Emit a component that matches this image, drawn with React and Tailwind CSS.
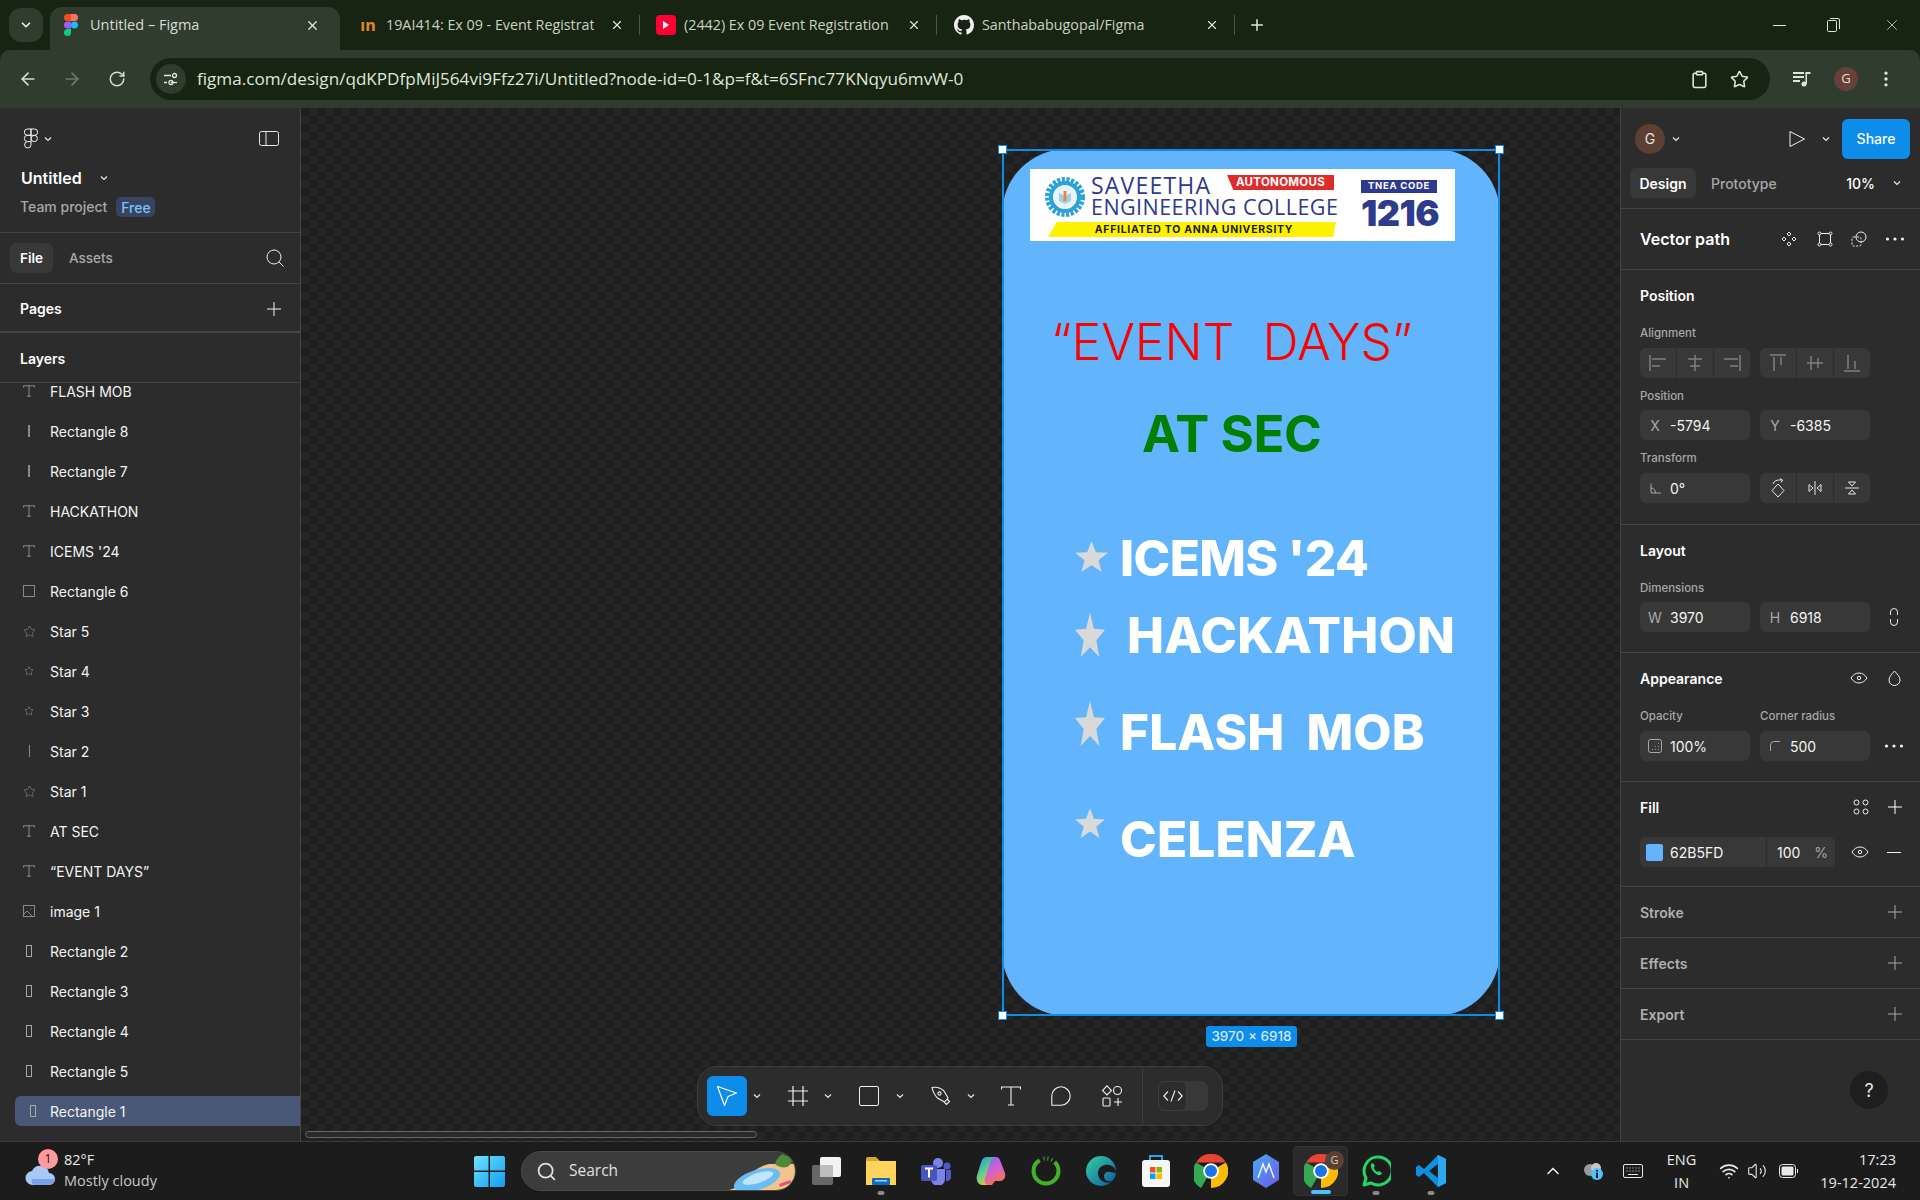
import React from 'react';
import { ArrowLeft, ArrowRight, RotateCw, X, Plus, Star, ChevronDown, Search, Clipboard, MoreVertical, ChevronUp, Wifi, Volume2 } from 'lucide-react';

const Chev = ({ className = '' }) => (
  <svg width="8" height="6" viewBox="0 0 8 6" fill="none" stroke="currentColor" strokeWidth="1.2" className={`text-[#e8e8e8] shrink-0 ${className}`}><path d="M1 1.5 4 4.5 7 1.5" /></svg>
);
const P = ({ className = 'text-[#f0f0f0]', s = 16 }) => (
  <svg width={s} height={s} viewBox="0 0 16 16" stroke="currentColor" strokeWidth="1" className={`shrink-0 ${className}`}><path d="M8 1v14M1 8h14" /></svg>
);
const Dots = () => (
  <svg width="20" height="4" viewBox="0 0 20 4" fill="#f0f0f0"><circle cx="2.5" cy="2" r="1.6" /><circle cx="10" cy="2" r="1.6" /><circle cx="17.5" cy="2" r="1.6" /></svg>
);
const EyeI = () => (
  <svg width="18" height="12" viewBox="0 0 18 12" fill="none" stroke="#f0f0f0" strokeWidth="1"><path d="M1 6c2-3.2 4.8-5 8-5s6 1.8 8 5c-2 3.2-4.8 5-8 5S3 9.200 1 6z" /><circle cx="9" cy="6" r="1.700" /></svg>
);

const layerIcon = {
  T: <svg width="12" height="12" viewBox="0 0 12 12" fill="none" stroke="#8a8a8a"><path d="M.5 2.500V.8h11v1.700M6 .8v10.400M4 11.200h4" /></svg>,
  bar: <div className="w-px h-[12px] bg-[#8a8a8a]" />,
  thin: <div className="w-[2px] h-[12px] bg-[#8a8a8a]" />,
  sq: <div className="w-[12px] h-[12px] border border-[#8a8a8a]" />,
  star: <Star size={13} strokeWidth={1} className="text-[#9a9a9a]" />,
  starS: <Star size={10} strokeWidth={1.200} className="text-[#9a9a9a]" />,
  img: <svg width="12" height="12" viewBox="0 0 12 12" fill="none" stroke="#8a8a8a"><rect x=".5" y=".5" width="11" height="11" /><path d="M.5 9.500 4 6l5.500 5.500M7.500 4.500l1-1" /></svg>,
  tall: <div className="w-[6px] h-[12px] border border-[#a8a8a8]" />,
};

const layers = [
  ['T', 'FLASH MOB'], ['thin', 'Rectangle 8'], ['thin', 'Rectangle 7'], ['T', 'HACKATHON'], ['T', "ICEMS '24"],
  ['sq', 'Rectangle 6'], ['star', 'Star 5'], ['starS', 'Star 4'], ['starS', 'Star 3'], ['bar', 'Star 2'], ['star', 'Star 1'],
  ['T', 'AT SEC'], ['T', '“EVENT DAYS”'], ['img', 'image 1'], ['tall', 'Rectangle 2'], ['tall', 'Rectangle 3'], ['tall', 'Rectangle 4'], ['tall', 'Rectangle 5'],
];

function BrowserTab({ icon, title, w, textW = 'w-[205px]', gapL = 'ml-[8px]' }) {
  return (
    <div className={`flex items-center h-[36px] relative shrink-0 ${w}`}>
      <div className="w-[20px] flex justify-center shrink-0">{icon}</div>
      <span className={`${gapL} whitespace-nowrap overflow-hidden text-[14.300px] text-[#c9d2c2] ${textW}`}>{title}</span>
      <X size={14} className="absolute text-[#dfe6da] top-[11px] right-[16px]" />
      <div className="absolute right-0 top-[8px] w-px h-[20px] bg-[#4a5646]" />
    </div>
  );
}

function TabStrip() {
  return (
    <div className="h-[50px] bg-[#182412] flex items-end relative [font-family:'Open_Sans',sans-serif] shrink-0">
      <div className="absolute left-[9px] top-[8px] w-[34px] h-[34px] rounded-[12px] bg-[#303c2e] flex items-center justify-center">
        <ChevronDown size={14} strokeWidth={3} className="text-[#e5ebe0]" />
      </div>
      <div className="ml-[50px] w-[290px] h-[43px] bg-[#303c2e] rounded-t-[12px] flex items-center pl-[14px] pb-[7px] relative shrink-0">
        <svg width="14" height="22" viewBox="0 0 14 22"><path d="M0 3.500A3.500 3.500 0 0 1 3.500 0H7v7H3.500A3.500 3.500 0 0 1 0 3.500z" fill="#f24e1e" /><path d="M7 0h3.500a3.500 3.500 0 1 1 0 7H7z" fill="#ff7262" /><path d="M0 11a3.500 3.500 0 0 1 3.500-3.500H7v7H3.500A3.500 3.500 0 0 1 0 11z" fill="#a259ff" /><circle cx="10.500" cy="11" r="3.500" fill="#1abcfe" /><path d="M0 18.500A3.500 3.500 0 0 1 3.500 15H7v3.500a3.500 3.500 0 1 1-7 0z" fill="#0acf83" /></svg>
        <span className="ml-[12px] text-[14.500px] text-[#d6ddd0] whitespace-nowrap">Untitled – Figma</span>
        <X size={15} className="absolute right-[20px] text-[#e5ebe0]" />
      </div>
      <div className="flex items-center h-[43px] pb-[7px] shrink-0">
        <div className="ml-[18px]">
          <BrowserTab w="w-[282px]" textW="w-[208px]" title="19AI414: Ex 09 - Event Registrat" icon={<span className="text-[#e8871e] font-bold text-[16px] leading-none">ın</span>} />
        </div>
        <div className="ml-[16px]">
          <BrowserTab w="w-[281px]" textW="w-[205px]" title="(2442) Ex 09 Event Registration" icon={<div className="w-[20px] h-[20px] bg-[#ff0033] rounded-[4px] flex items-center justify-center"><div className="w-0 h-0 border-y-[4px] border-y-transparent border-l-[6px] border-l-white" /></div>} />
        </div>
        <div className="ml-[17px]">
          <BrowserTab w="w-[281px]" title="Santhababugopal/Figma" icon={
            <svg width="22" height="22" viewBox="0 0 16 16" fill="#f0f0f0"><path d="M8 0C3.580 0 0 3.580 0 8c0 3.540 2.290 6.530 5.470 7.590.4.070.55-.17.55-.38v-1.340c-2.230.48-2.700-1.080-2.700-1.080-.36-.92-.89-1.170-.89-1.170-.73-.5.050-.49.050-.49.810.06 1.230.83 1.230.83.710 1.220 1.870.87 2.330.66.070-.52.280-.87.510-1.070-1.780-.2-3.640-.89-3.640-3.950 0-.87.310-1.590.82-2.150-.08-.2-.36-1.020.08-2.120 0 0 .67-.21 2.200.82A7.600 7.600 0 0 1 8 3.870c.68 0 1.360.09 2 .27 1.530-1.040 2.200-.82 2.200-.82.44 1.100.16 1.920.08 2.120.51.56.82 1.270.82 2.150 0 3.070-1.870 3.750-3.650 3.950.29.250.54.730.54 1.480v2.190c0 .21.150.46.550.38A8 8 0 0 0 16 8c0-4.420-3.580-8-8-8z" /></svg>
          } />
        </div>
        <Plus size={18} className="ml-[13px] text-[#dfe6da]" />
      </div>
      <div className="ml-auto flex items-center h-[43px] pb-[7px] pr-[19px] text-[#dfe6da]">
        <div className="w-[13px] h-px bg-current" />
        <svg width="13" height="14" viewBox="0 0 13 14" fill="none" stroke="currentColor" className="ml-[41px]"><rect x=".5" y="2.500" width="9" height="11" rx="1" /><path d="M3 .5h8a1.500 1.500 0 0 1 1.500 1.500v9" /></svg>
        <X size={18} strokeWidth={1} className="ml-[43px]" />
      </div>
    </div>
  );
}

function AddressBar() {
  return (
    <div className="h-[58px] bg-[#303c2e] rounded-t-[10px] flex items-center shrink-0 [font-family:'Open_Sans',sans-serif]">
      <ArrowLeft size={20} className="ml-[18px] text-[#d5dcd0]" />
      <ArrowRight size={20} className="ml-[24px] text-[#70796c]" />
      <RotateCw size={18} className="ml-[26px] text-[#d5dcd0]" />
      <div className="ml-[24px] w-[1620px] h-[42px] bg-[#182412] rounded-full flex items-center shrink-0">
        <div className="ml-[6px] w-[30px] h-[30px] rounded-full bg-[#303c2e] flex items-center justify-center">
          <svg width="16" height="16" viewBox="0 0 16 16" fill="none" stroke="#dfe6da" strokeWidth="1.300"><path d="M1 4.500h7M1 11.500h3" /><circle cx="11.500" cy="4.500" r="2" /><path d="M8 11.500h6" /><circle cx="8" cy="11.500" r="2" /></svg>
        </div>
        <span className="ml-[11px] text-[#dfe6da] text-[17.130px] whitespace-nowrap">figma.com/design/qdKPDfpMiJ564vi9Ffz27i/Untitled?node-id=0-1&amp;p=f&amp;t=6SFnc77KNqyu6mvW-0</span>
        <Clipboard size={19} className="ml-auto text-[#dfe6da]" />
        <Star size={19} className="ml-[21px] mr-[21px] text-[#dfe6da]" />
      </div>
      <svg className="ml-[22px] text-[#dfe6da]" width="20" height="18" viewBox="0 0 20 18" fill="currentColor"><rect x="1" y="2" width="11" height="2" /><rect x="1" y="6" width="11" height="2" /><rect x="1" y="10" width="7" height="2" /><circle cx="12" cy="14" r="2.500" /><rect x="13.500" y="3" width="1.500" height="11" /><rect x="13.500" y="2" width="5" height="2" /></svg>
      <div className="ml-[22px] w-[24px] h-[24px] rounded-full bg-[#66413a] flex items-center justify-center text-[#e9dfdc] text-[13px]">G</div>
      <MoreVertical size={20} className="ml-[18px] text-[#dfe6da]" />
    </div>
  );
}

function LeftPanel() {
  return (
    <aside className="w-[301px] bg-[#2c2c2c] border-r border-[#444] flex flex-col shrink-0 text-white">
      <div className="h-[125px] border-b border-[#444] relative shrink-0 px-[20px] pt-[20px]">
        <div className="flex items-center">
          <svg width="16" height="21" viewBox="0 0 16 21" fill="none" stroke="#f0f0f0" strokeWidth="1" className="ml-[3px]"><path d="M4.500 1H8v6.300H4.500a3.150 3.150 0 0 1 0-6.300zM8 1h3.500a3.150 3.150 0 0 1 0 6.300H8zM4.500 7.300H8v6.300H4.500a3.150 3.150 0 0 1 0-6.300z" /><circle cx="11.300" cy="10.500" r="3.150" /><path d="M4.500 13.600H8v3.200a3.200 3.200 0 1 1-3.500-3.200z" /></svg>
          <Chev className="ml-[5px]" />
          <svg width="20" height="15" viewBox="0 0 20 15" fill="none" stroke="#e8e8e8" className="ml-auto mr-[1px]"><rect x=".5" y=".5" width="19" height="14" rx="2" /><path d="M7 .5v14" /></svg>
        </div>
        <div className="flex items-center mt-[19px]">
          <span className="text-[16px] font-semibold ml-[1px] leading-[20px]">Untitled</span>
          <Chev className="ml-[18px]" />
        </div>
        <div className="flex items-center mt-[9px]">
          <span className="text-[#a8a8a8] text-[14px] font-medium leading-[20px]">Team project</span>
          <span className="ml-[9px] w-[39px] h-[20px] rounded-[5px] bg-[#394360] text-[#7cc4f8] text-[14px] font-medium flex items-center justify-center">Free</span>
        </div>
      </div>
      <div className="h-[51px] border-b border-[#444] flex items-center pl-[10px] pr-[16px] shrink-0">
        <div className="w-[43px] h-[30px] bg-[#383838] rounded-[6px] flex items-center justify-center text-[13.500px] font-semibold">File</div>
        <span className="ml-[16px] text-[13.500px] font-medium text-[#a8a8a8]">Assets</span>
        <svg width="18" height="18" viewBox="0 0 18 18" fill="none" stroke="#f0f0f0" strokeWidth="1" className="ml-auto"><circle cx="8" cy="8" r="7" /><path d="m13 13 4.500 4.500" /></svg>
      </div>
      <div className="h-[49px] border-b-2 border-[#444] flex items-center pl-[20px] pr-[18px] pt-[2px] shrink-0">
        <span className="text-[14px] font-semibold">Pages</span>
        <P className="ml-auto text-[#f0f0f0]" />
      </div>
      <div className="h-[50px] border-b border-[#444] flex items-center pl-[20px] pt-[2px] shrink-0">
        <span className="text-[14px] font-semibold">Layers</span>
      </div>
      <div className="flex-1 overflow-hidden relative">
        <div className="-mt-[12px]">
          {layers.map(([k, n], i) => (
            <div key={i} className="h-[40px] flex items-center">
              <div className="w-[50px] flex justify-center pl-[18px] pr-[10px]">{layerIcon[k]}</div>
              <span className="text-[14px] font-normal text-[#f4f4f4] whitespace-nowrap">{n}</span>
            </div>
          ))}
          <div className="h-[30px] mt-[5px] ml-[15px] bg-[#4a5878] rounded-l-[6px] flex items-center">
            <div className="w-[35px] flex justify-center pr-[5px] pl-[5px]">{layerIcon.tall}</div>
            <span className="text-[14px] text-[#f4f4f4] whitespace-nowrap">Rectangle 1</span>
          </div>
        </div>
      </div>
    </aside>
  );
}

const StarShape = ({ className }) => (
  <svg viewBox="0 0 100 100" preserveAspectRatio="none" className={`absolute ${className}`}><polygon points="50,0 63,36 100,38 71,62 81,100 50,78 19,100 29,62 0,38 37,36" fill="#d9d9d9" /></svg>
);
const Handle = ({ className }) => <div className={`absolute w-[9px] h-[9px] bg-white border border-[#0d8ce9] ${className}`} />;

function Artboard() {
  return (
    <div className="absolute left-[701px] top-[41px] w-[498px] h-[867px] [font-family:Inter,sans-serif]">
      <div className="absolute inset-0 bg-[#62b5fd] rounded-[65px]" />
      <div className="absolute inset-0 border-2 border-[#0d8ce9]" />
      <Handle className="-left-[4px] -top-[4px]" />
      <Handle className="-right-[4px] -top-[4px]" />
      <Handle className="-left-[4px] -bottom-[4px]" />
      <Handle className="-right-[4px] -bottom-[4px]" />

      <div className="absolute left-[28px] top-[20px] w-[425px] h-[72px] bg-white overflow-hidden">
        <svg className="absolute left-[15px] top-[8px]" width="40" height="40" viewBox="0 0 40 40"><circle cx="20" cy="20" r="17" fill="none" stroke="#2aa3d8" strokeWidth="6" strokeDasharray="3 1.500" /><circle cx="20" cy="20" r="14" fill="none" stroke="#2aa3d8" strokeWidth="4" /><circle cx="20" cy="20" r="11" fill="#e8f3fa" /><path d="M14 16l6 3 6-3v8l-6 3-6-3z" fill="#9fd0ea" /><rect x="18.500" y="14" width="3" height="10" fill="#e88a3c" /></svg>
        <span className="absolute left-[61px] top-[6px] text-[#2e3a8c] text-[23px] font-medium leading-[21px] tracking-[1.200px] [font-family:'Open_Sans',sans-serif] whitespace-nowrap">SAVEETHA</span>
        <span className="absolute left-[61px] top-[27px] text-[#2e3a8c] text-[21.500px] font-medium leading-[21px] tracking-[0.450px] [font-family:'Open_Sans',sans-serif] whitespace-nowrap">ENGINEERING COLLEGE</span>
        <div className="absolute left-[197px] top-[6px] w-[107px] h-[15px] bg-[#e02b2b] flex items-center justify-center text-white font-bold text-[11.500px] [clip-path:polygon(0_0,100%_0,100%_100%,6%_100%)] tracking-[0.300px]">AUTONOMOUS</div>
        <div className="absolute left-[18px] top-[53px] w-[288px] h-[15px] bg-[#fff200] flex items-center justify-center text-[#1a1a1a] font-bold text-[10.500px] tracking-[0.700px] [clip-path:polygon(3%_0,100%_0,99%_100%,0_100%)] whitespace-nowrap pl-[4px]">AFFILIATED TO ANNA UNIVERSITY</div>
        <div className="absolute left-[331px] top-[11px] w-[76px] h-[13px] bg-[#2e3a8c] flex items-center justify-center text-white font-bold text-[9.500px] tracking-[0.700px] whitespace-nowrap">TNEA CODE</div>
        <span className="absolute left-[331px] top-[24px] text-[#2e3a8c] text-[36px] leading-[40px] font-black tracking-[-0.500px]">1216</span>
      </div>

      <span className="absolute left-[49px] top-[162px] text-[#ff0000] text-[50px] leading-[62px] font-light whitespace-pre">“EVENT  DAYS”</span>
      <span className="absolute left-[140px] top-[253px] text-[#008000] text-[51px] leading-[64px] font-bold tracking-[-0.400px] whitespace-pre">AT SEC</span>
      <span className="absolute left-[118px] top-[379px] text-white text-[49.500px] leading-[60px] font-extrabold tracking-[-0.600px] whitespace-pre">ICEMS '24</span>
      <span className="absolute left-[125px] top-[456px] text-white text-[49.500px] leading-[60px] font-extrabold tracking-[0.150px] whitespace-pre">HACKATHON</span>
      <span className="absolute left-[118px] top-[553px] text-white text-[49.500px] leading-[60px] font-extrabold tracking-[0.150px] whitespace-pre">FLASH  MOB</span>
      <span className="absolute left-[118px] top-[660px] text-white text-[49.500px] leading-[60px] font-extrabold tracking-[0.150px] whitespace-pre">CELENZA</span>

      <StarShape className="left-[73px] top-[392px] w-[33px] h-[31px]" />
      <StarShape className="left-[73px] top-[464px] w-[30px] h-[44px]" />
      <StarShape className="left-[73px] top-[552px] w-[30px] h-[45px]" />
      <StarShape className="left-[73px] top-[659px] w-[30px] h-[30px]" />

      <div className="absolute left-[204px] -bottom-[31px] w-[91px] h-[21px] rounded-[3px] bg-[#0d8ce9] text-[#cfe8ff] text-[13.500px] font-medium flex items-center justify-center whitespace-nowrap">3970 × 6918</div>
    </div>
  );
}

const Tool = ({ children, className = '' }) => (
  <div className={`w-[40px] h-[40px] shrink-0 flex items-center justify-center text-[#f0f0f0] ${className}`}>{children}</div>
);

function BottomTools() {
  return (
    <div className="absolute left-[396px] top-[958px] w-[526px] h-[60px] bg-[#2c2c2c] border border-[#3d3d3d] rounded-[20px] flex items-center pl-[9px] [font-family:Inter,sans-serif]">
      <div className="w-[40px] h-[40px] rounded-[6px] bg-[#0d8ce9] flex items-center justify-center">
        <svg width="22" height="22" viewBox="0 0 22 22" fill="none" stroke="#fff" strokeWidth="1.200" strokeLinejoin="round"><path d="M1.500 1.500 20.500 8l-8.500 3.500L8.500 20.500z" /></svg>
      </div>
      <Chev className="ml-[6px]" />
      <Tool className="ml-[17px]"><svg width="20" height="20" viewBox="0 0 20 20" fill="none" stroke="currentColor" strokeWidth="1.200"><path d="M0 5h20M0 15h20M5 0v20M15 0v20" /></svg></Tool>
      <Chev className="ml-[6px]" />
      <Tool className="ml-[17px]"><div className="w-[20px] h-[20px] rounded-[2px] border border-[#f0f0f0]" /></Tool>
      <Chev className="ml-[7px]" />
      <Tool className="ml-[17px]"><svg width="22" height="22" viewBox="0 0 22 22" fill="none" stroke="currentColor" strokeWidth="1.100"><path d="M2 2.500c5-.8 9 .5 12 3.500l4 7-3.500 4-7-4C4.500 10 2.800 6.500 2 2.500zM14.500 17.500l2 2 3-3-2-2" /><circle cx="9.500" cy="8.500" r="1.600" /></svg></Tool>
      <Chev className="ml-[6px]" />
      <Tool className="ml-[16px]"><svg width="20" height="20" viewBox="0 0 20 20" fill="none" stroke="currentColor" strokeWidth="1.100"><path d="M.5 3.500V1h19v2.500M10 1v18M7 19h6" /></svg></Tool>
      <Tool className="ml-[10px]"><svg width="20" height="20" viewBox="0 0 20 20" fill="none" stroke="currentColor" strokeWidth="1.100"><path d="M10 .8a9.200 9.200 0 0 1 0 18.400H.8V10A9.200 9.200 0 0 1 10 .8z" /></svg></Tool>
      <Tool className="ml-[11px]"><svg width="22" height="22" viewBox="0 0 22 22" fill="none" stroke="currentColor" strokeWidth="1.100"><path d="M6 .8 10.500 5.500 6 10 1.500 5.500z" /><circle cx="16.500" cy="5.500" r="4" /><rect x="2" y="13" width="7" height="8" rx="1" /><path d="M13 17h8M17 13v8" /></svg></Tool>
      <div className="ml-[10px] w-px h-[58px] bg-[#3d3d3d]" />
      <div className="ml-[15px] w-[50px] h-[30px] rounded-[7px] bg-[#383838]">
        <div className="w-[29px] h-[30px] rounded-[7px] bg-[#2c2c2c] border border-[#3f3f3f] flex items-center justify-center">
          <svg width="20" height="12" viewBox="0 0 20 12" fill="none" stroke="#f0f0f0" strokeWidth="1.100"><path d="M5 1.500.8 6 5 10.500M15 1.500 19.200 6 15 10.500M12 .5 8 11.500" /></svg>
        </div>
      </div>
    </div>
  );
}

function Canvas() {
  return (
    <main className="flex-1 relative overflow-hidden bg-[repeating-conic-gradient(#252525_0_25%,#1e1e1e_0_50%)] bg-[length:16px_16px]">
      <Artboard />
      <BottomTools />
      <div className="absolute left-[4px] bottom-[3px] w-[452px] h-[7px] rounded-full border border-[#666] bg-[#2a2a2a]" />
    </main>
  );
}

const Label = ({ children, className = '' }) => <div className={`text-[11.500px] font-medium text-[#a8a8a8] leading-[14px] ${className}`}>{children}</div>;
const Field = ({ pre, val, w = 'w-[110px]' }) => (
  <div className={`${w} h-[30px] bg-[#383838] rounded-[6px] flex items-center shrink-0`}>
    <div className="w-[30px] flex justify-center text-[#a8a8a8] text-[14px]">{pre}</div>
    <span className="text-[14px] text-[#f4f4f4]">{val}</span>
  </div>
);
const Head = ({ children, className = 'text-white' }) => <span className={`text-[14px] font-semibold ${className}`}>{children}</span>;

function Seg({ items }) {
  return (
    <div className="w-[110px] h-[30px] bg-[#383838] rounded-[6px] flex divide-x divide-[#2c2c2c] overflow-hidden shrink-0">
      {items.map((it, i) => <div key={i} className="flex-1 flex items-center justify-center">{it}</div>)}
    </div>
  );
}

const g = '#7f7f7f';
const alignIcons = [
  <svg width="18" height="18" viewBox="0 0 18 18" stroke={g} strokeWidth="1.500"><path d="M1 1v16M3 5h14M3 12h8" /></svg>,
  <svg width="18" height="18" viewBox="0 0 18 18" stroke={g} strokeWidth="1.500"><path d="M9 1v16M2 5h14M4 12h10" /></svg>,
  <svg width="18" height="18" viewBox="0 0 18 18" stroke={g} strokeWidth="1.500"><path d="M17 1v16M1 5h14M7 12h8" /></svg>,
];
const valignIcons = [
  <svg width="18" height="18" viewBox="0 0 18 18" stroke={g} strokeWidth="1.500"><path d="M1 1h16M5 3v14M12 3v8" /></svg>,
  <svg width="18" height="18" viewBox="0 0 18 18" stroke={g} strokeWidth="1.500"><path d="M1 9h16M5 2v14M12 4v10" /></svg>,
  <svg width="18" height="18" viewBox="0 0 18 18" stroke={g} strokeWidth="1.500"><path d="M1 17h16M5 1v14M12 7v8" /></svg>,
];
const w1 = '#e8e8e8';
const flipIcons = [
  <svg width="14" height="20" viewBox="0 0 14 20" fill="none" stroke={w1}><path d="M7 6l6 6.500-6 6.500-6-6.500zM2 6C3 3 6 1.500 11 2M9 .5 11.500 2 10 4.500" /></svg>,
  <svg width="14" height="14" viewBox="0 0 14 14" fill="none" stroke={w1}><path d="M7 0v14M1 3.500 5 7l-4 3.500zM13 3.500 9 7l4 3.500z" /></svg>,
  <svg width="14" height="14" viewBox="0 0 14 14" fill="none" stroke={w1}><path d="M0 7h14M3.500 1h7L7 5zM3.500 13h7L7 9z" /></svg>,
];

function RightPanel() {
  return (
    <aside className="w-[300px] overflow-hidden bg-[#2c2c2c] border-l border-[#444] flex flex-col text-white shrink-0">
      <div className="h-[61px] flex items-center pl-[14px] shrink-0">
        <div className="w-[30px] h-[30px] rounded-full bg-[#5c4033] flex items-center justify-center text-[14px] text-[#e8e0dc]">G</div>
        <Chev className="ml-[7px]" />
        <svg width="18" height="18" viewBox="0 0 18 18" fill="none" stroke="#f0f0f0" strokeWidth="1" className="ml-[108px] shrink-0"><path d="M2 1.500v15L16.500 9z" strokeLinejoin="round" /></svg>
        <Chev className="ml-[16px]" />
        <div className="ml-[12px] w-[68px] h-[40px] rounded-[6px] bg-[#0d8ce9] flex items-center justify-center text-[14px] font-medium shrink-0">Share</div>
      </div>
      <div className="h-[41px] border-b border-[#444] flex items-start pl-[9px] pr-[19px] -mt-[1px] shrink-0">
        <div className="w-[66px] h-[30px] rounded-[6px] bg-[#383838] flex items-center justify-center text-[14px] font-semibold">Design</div>
        <span className="ml-[15px] h-[30px] flex items-center text-[14px] font-medium text-[#a8a8a8]">Prototype</span>
        <span className="ml-auto mr-[2px] h-[30px] flex items-center text-[14px] font-medium">10%</span>
        <Chev className="ml-[16px] mt-[12px]" />
      </div>
      <div className="h-[61px] border-b border-[#444] flex items-center pl-[19px] pr-[15px] shrink-0">
        <span className="text-[16px] font-semibold whitespace-nowrap">Vector path</span>
        <svg width="16" height="16" viewBox="0 0 16 16" fill="none" stroke="#f0f0f0" strokeWidth="1" className="ml-[51px] shrink-0"><path d="m8 1 2 2-2 2-2-2zM3 6l2 2-2 2-2-2zM13 6l2 2-2 2-2-2zM8 11l2 2-2 2-2-2z" /></svg>
        <svg width="16" height="16" viewBox="0 0 16 16" fill="none" stroke="#f0f0f0" strokeWidth="1" className="ml-[20px] shrink-0"><rect x="2.500" y="2.500" width="11" height="11" /><circle cx="2.500" cy="2.500" r="1.500" fill="#2c2c2c" /><circle cx="13.500" cy="2.500" r="1.500" fill="#2c2c2c" /><circle cx="2.500" cy="13.500" r="1.500" fill="#2c2c2c" /><circle cx="13.500" cy="13.500" r="1.500" fill="#2c2c2c" /></svg>
        <svg width="16" height="16" viewBox="0 0 16 16" fill="none" stroke="#f0f0f0" strokeWidth="1" className="ml-[18px] shrink-0"><circle cx="10" cy="6" r="5" /><rect x="1" y="6" width="9" height="9" rx="1.500" strokeDasharray="2 1.500" /></svg>
        <div className="ml-auto"><Dots /></div>
      </div>
      <div className="h-[255px] border-b border-[#444] pl-[19px] pr-[19px] pt-[15px] shrink-0">
        <div className="h-[20px] flex items-center"><Head>Position</Head></div>
        <Label className="mt-[21px]">Alignment</Label>
        <div className="flex gap-[10px] mt-[8px]"><Seg items={alignIcons} /><Seg items={valignIcons} /></div>
        <Label className="mt-[11px]">Position</Label>
        <div className="flex gap-[10px] mt-[7px]"><Field pre="X" val="-5794" /><Field pre="Y" val="-6385" /></div>
        <Label className="mt-[11px]">Transform</Label>
        <div className="flex gap-[10px] mt-[8px]">
          <Field pre={<svg width="11" height="11" viewBox="0 0 11 11" fill="none" stroke="#a8a8a8"><path d="M1 .5v9.500h10M1 5c2.500 0 4.500 2 4.500 5" /></svg>} val="0°" />
          <Seg items={flipIcons} />
        </div>
      </div>
      <div className="h-[128px] border-b border-[#444] pl-[19px] pr-[19px] pt-[15px] shrink-0">
        <div className="h-[20px] flex items-center"><Head>Layout</Head></div>
        <Label className="mt-[21px]">Dimensions</Label>
        <div className="flex items-center gap-[10px] mt-[7px]">
          <Field pre="W" val="3970" /><Field pre="H" val="6918" />
          <svg width="8" height="18" viewBox="0 0 8 18" fill="none" stroke="#e8e8e8" className="ml-[10px] shrink-0"><path d="M.5 7V4a3.500 3.500 0 0 1 7 0v3M.5 11v3a3.500 3.500 0 0 0 7 0v-3" /></svg>
        </div>
      </div>
      <div className="h-[129px] border-b border-[#444] pl-[19px] pr-[19px] pt-[15px] shrink-0">
        <div className="h-[20px] flex items-center">
          <Head>Appearance</Head>
          <div className="ml-auto flex items-center gap-[20px]">
            <EyeI />
            <svg width="13" height="16" viewBox="0 0 13 16" fill="none" stroke="#f0f0f0"><path d="M6.500 1C9 4 12 6.500 12 10a5.500 5.500 0 0 1-11 0c0-3.500 3-6 5.500-9z" /></svg>
          </div>
        </div>
        <div className="flex gap-[10px] mt-[21px]"><Label className="w-[110px]">Opacity</Label><Label>Corner radius</Label></div>
        <div className="flex items-center gap-[10px] mt-[8px]">
          <Field pre={<svg width="14" height="14" viewBox="0 0 14 14" fill="none" stroke="#a8a8a8"><rect x=".5" y=".5" width="13" height="13" rx="2" /><path d="M4 10.500h.8M7 10.500h.8M10 10.500h.8M7 7.500h.8M10 7.500h.8M10 4.500h.8" /></svg>} val="100%" />
          <Field pre={<svg width="10" height="10" viewBox="0 0 10 10" fill="none" stroke="#a8a8a8"><path d="M.5 10V4A3.500 3.500 0 0 1 4 .5h6" /></svg>} val="500" />
          <div className="ml-[4px]"><Dots /></div>
        </div>
      </div>
      <div className="h-[105px] border-b border-[#444] pl-[19px] pr-[19px] pt-[15px] shrink-0">
        <div className="h-[20px] flex items-center">
          <Head>Fill</Head>
          <svg width="16" height="16" viewBox="0 0 16 16" fill="none" stroke="#f0f0f0" className="ml-auto"><circle cx="3.500" cy="3.500" r="2.500" /><circle cx="12.500" cy="3.500" r="2.500" /><circle cx="3.500" cy="12.500" r="2.500" /><circle cx="12.500" cy="12.500" r="2.500" /></svg>
          <P className="ml-[18px] mr-[-2px]" />
        </div>
        <div className="flex items-center mt-[20px]">
          <div className="w-[195px] h-[30px] bg-[#383838] rounded-[6px] flex items-center pl-[6px] shrink-0">
            <div className="w-[17px] h-[17px] rounded-[2px] bg-[#62b5fd]" />
            <span className="ml-[7px] w-[96px] text-[14px] text-[#f4f4f4]">62B5FD</span>
            <div className="w-px h-[30px] bg-[#2c2c2c]" />
            <span className="ml-[10px] text-[14px] text-[#f4f4f4]">100</span>
            <span className="ml-[14px] text-[14px] text-[#a8a8a8]">%</span>
          </div>
          <div className="ml-[16px]"><EyeI /></div>
          <div className="ml-[18px] w-[15px] h-px bg-[#f0f0f0]" />
        </div>
      </div>
      {['Stroke', 'Effects', 'Export'].map((t) => (
        <div key={t} className="h-[51px] border-b border-[#444] flex items-center pl-[19px] pr-[17px] shrink-0">
          <Head className="text-[#b0b0b0]">{t}</Head>
          <P className="ml-auto text-[#a8a8a8]" />
        </div>
      ))}
      <div className="flex-1 relative">
        <div className="absolute left-[229px] top-[31px] w-[38px] h-[38px] rounded-full bg-[#1e1e1e] flex items-center justify-center text-[#e8e8e8] text-[18px]">?</div>
      </div>
    </aside>
  );
}

const ChromeIcon = () => (
  <svg width="34" height="34" viewBox="0 0 48 48"><path d="M24 24 10 48A24 24 0 0 1 3 12z" fill="#34a853" /><path d="M24 24 45 12A24 24 0 0 1 24 48z" fill="#fbbc04" /><path d="M3 12A24 24 0 0 1 45 12H24z" fill="#ea4335" /><circle cx="24" cy="24" r="11" fill="#fff" /><circle cx="24" cy="24" r="8.500" fill="#1a73e8" /></svg>
);

function TaskIcon({ children, dot, active }) {
  return (
    <div className={`w-[55px] h-[50px] relative flex items-center justify-center shrink-0 rounded-[4px] ${active ? 'bg-[#2a2a2a] border border-[#333]' : ''}`}>
      {children}
      {dot && <div className={`absolute bottom-[1px] left-1/2 -translate-x-1/2 h-[4px] rounded-full ${active ? 'w-[20px] bg-[#4cc2ff]' : 'w-[7px] bg-[#8a8a8a]'}`} />}
    </div>
  );
}

function Taskbar() {
  return (
    <footer className="h-[59px] bg-[#1c1c1c] border-t border-[#3a3a3a] flex items-center shrink-0 [font-family:'Open_Sans',sans-serif] text-[#e8e8e8] relative">
      <div className="w-[474px] flex items-center shrink-0 pl-[25px]">
        <div className="relative w-[39px] h-[40px]">
          <svg className="absolute left-0 top-[10px]" width="31" height="26" viewBox="0 0 31 26"><path d="M8 24a7 7 0 0 1-1-14 9 9 0 0 1 17 2 6 6 0 0 1 0 12z" fill="#a9c8f5" /><path d="M8 24a7 7 0 0 1-1-6h23a6 6 0 0 1-6 6z" fill="#7aa3e6" /></svg>
          <div className="absolute left-[13px] -top-[2px] w-[20px] h-[20px] rounded-full bg-[#ff9aa0] text-[#2a1a1a] text-[13px] flex items-center justify-center">1</div>
        </div>
        <div className="text-[14.500px] leading-[21px] whitespace-nowrap -mt-[3px]">
          <div>82°F</div>
          <div className="text-[#c8c8c8]">Mostly cloudy</div>
        </div>
      </div>
      <svg width="31" height="31" viewBox="0 0 31 31" className="shrink-0"><defs><linearGradient id="wg" x1="0" y1="0" x2="1" y2="1"><stop offset="0" stopColor="#6fe3ff" /><stop offset="1" stopColor="#0f9df0" /></linearGradient></defs><path d="M0 2a2 2 0 0 1 2-2h12.500v14.500H0zM16 0h13a2 2 0 0 1 2 2v12.500H16zM0 16h14.500v15H2a2 2 0 0 1-2-2zM16 16h15v13a2 2 0 0 1-2 2H16z" fill="url(#wg)" /></svg>
      <div className="ml-[16px] w-[275px] h-[40px] rounded-full bg-[#3c3c3c] border border-[#4a4a4a] flex items-center relative overflow-hidden shrink-0">
        <Search size={21} className="ml-[14px] text-[#e0e0e0]" />
        <span className="ml-[12px] text-[15.500px] text-[#e0e0e0]">Search</span>
        <svg className="absolute right-0 top-0" width="66" height="40" viewBox="0 0 66 40"><path d="M66 12H40Q24 16 14 30 8 36 0 38h66z" fill="#f2c48d" /><ellipse cx="28" cy="28" rx="24" ry="10" transform="rotate(-18 28 28)" fill="#69bdf2" /><ellipse cx="29" cy="26" rx="16" ry="5" transform="rotate(-18 29 26)" fill="#bfe5fb" /><path d="M46 12c2-6 5-9 8-10 2 2 6 3 10 2-1 5-2 9-6 11-4 1-9 0-12-3z" fill="#4c8a35" /><rect x="50" y="30" width="12" height="3" fill="#e8507a" transform="rotate(-20 56 31)" /></svg>
      </div>
      <div className="ml-[2px] flex items-center">
        <TaskIcon><svg width="30" height="30" viewBox="0 0 30 30"><rect x="9" y="1" width="21" height="20" rx="2" fill="#f2f2f2" /><rect x="1" y="9" width="21" height="20" rx="2" fill="#6e6e6e" opacity=".92" /><rect x="9" y="9" width="13" height="12" fill="#bdbdbd" /></svg></TaskIcon>
        <TaskIcon dot><svg width="30" height="28" viewBox="0 0 30 28"><path d="M0 2a2 2 0 0 1 2-2h8l4 4H0z" fill="#e0a526" /><path d="M0 4h30v24H0z" fill="#ffd35c" /><rect x="6" y="21" width="18" height="7" rx="1" fill="#0f6cbd" /><rect x="9" y="23" width="12" height="1.500" fill="#9fd0ff" /></svg></TaskIcon>
        <TaskIcon><svg width="30" height="28" viewBox="0 0 30 28"><circle cx="17" cy="6" r="5" fill="#7b83eb" /><circle cx="26" cy="9" r="3.500" fill="#5059c9" /><path d="M10 12h14v10a7 7 0 0 1-14 0z" fill="#7b83eb" /><path d="M25 13h5v7a4 4 0 0 1-5 4z" fill="#5059c9" /><rect x="0" y="8" width="16" height="16" rx="2" fill="#4b53bc" /><path d="M4 11.500h8M8 11.500v9" stroke="#fff" strokeWidth="2" /></svg></TaskIcon>
        <TaskIcon><svg width="30" height="30" viewBox="0 0 30 30"><defs><linearGradient id="cp" x1="0" y1="0" x2="0.600" y2="1"><stop offset="0" stopColor="#1b8fe8" /><stop offset=".55" stopColor="#5fd08a" /><stop offset="1" stopColor="#f4c534" /></linearGradient><linearGradient id="cp2" x1="0.300" y1="0" x2="0.800" y2="1"><stop offset="0" stopColor="#7b6cf0" /><stop offset=".5" stopColor="#d85fd0" /><stop offset="1" stopColor="#f47a3c" /></linearGradient></defs><path d="M20 1c2 0 3 1 4 3l5 13c1 4-1 8-5 8h-5l-3 4H7C2 29 0 24 1 20l4-13C6 3 8 1 11 1z" fill="url(#cp2)" /><path d="M11 1h9c-3 0-5 2-6 6l-5 15c-1 4 0 7 4 7H7C2 29 0 24 1 20l4-13C6 3 8 1 11 1z" fill="url(#cp)" /></svg></TaskIcon>
        <TaskIcon><svg width="30" height="30" viewBox="0 0 30 30" fill="none"><circle cx="15" cy="15" r="12.500" stroke="#43b02a" strokeWidth="4" strokeDasharray="52 4 1 3 1 3 1 3" /></svg></TaskIcon>
        <TaskIcon><svg width="30" height="30" viewBox="0 0 30 30"><defs><linearGradient id="ed" x1="0" y1="0" x2="1" y2="1"><stop offset="0" stopColor="#37d0a0" /><stop offset="1" stopColor="#0c59a4" /></linearGradient></defs><circle cx="15" cy="15" r="15" fill="url(#ed)" /><path d="M30 16c0-5-6-8-11-7-7 1-9 9-5 14 3 4 9 5 13 2-4 1-9 0-9-5 0-3 3-5 6-4 3 0 6 2 6 0z" fill="#1c1c1c" /></svg></TaskIcon>
        <TaskIcon><svg width="30" height="32" viewBox="0 0 30 32"><path d="M9 7V1h12v6" fill="none" stroke="#2aa3e8" strokeWidth="2" /><rect x="1" y="5" width="28" height="27" rx="3" fill="#f6f6f6" /><rect x="9" y="12" width="5.500" height="5.500" fill="#f25022" /><rect x="15.500" y="12" width="5.500" height="5.500" fill="#7fba00" /><rect x="9" y="18.500" width="5.500" height="5.500" fill="#00a4ef" /><rect x="15.500" y="18.500" width="5.500" height="5.500" fill="#ffb900" /></svg></TaskIcon>
        <TaskIcon><ChromeIcon /></TaskIcon>
        <TaskIcon><svg width="28" height="34" viewBox="0 0 28 34"><defs><linearGradient id="hx" x1="0" y1="0" x2="1" y2="1"><stop offset="0" stopColor="#4aa8f5" /><stop offset="1" stopColor="#6a5be8" /></linearGradient></defs><path d="M14 0 27 8v18l-13 8-13-8V8z" fill="url(#hx)" /><path d="M6 24 11 10l3 8 3-8 5 14" fill="none" stroke="#eef4ff" strokeWidth="1.500" /></svg></TaskIcon>
        <TaskIcon active dot>
          <ChromeIcon />
          <div className="absolute right-[3px] top-[4px] w-[19px] h-[19px] rounded-full bg-[#5c4033] text-[#d8cfca] text-[11px] flex items-center justify-center">G</div>
        </TaskIcon>
        <TaskIcon dot><svg width="30" height="32" viewBox="0 0 30 32" fill="none"><path d="M3 30 5 23A14 14 0 1 1 10 28z" stroke="#25d366" strokeWidth="3" strokeLinejoin="round" /><path d="M10 9c-1 3 2 8 5 10 2 1.500 5 2 6-1l-3-2-1.500 1c-2-1-3-2.500-4-4.500L14 11l-2-3z" fill="#25d366" /></svg></TaskIcon>
        <TaskIcon dot><svg width="30" height="32" viewBox="0 0 30 32"><path d="M22 0 30 4v24l-8 4L8 18l-5 4-3-2v-8l3-2 5 4zM22 9 13 16l9 7z" fill="#0e8fe0" /><path d="M22 0 30 4v24l-8 4z" fill="#2aa9f0" /></svg></TaskIcon>
      </div>
      <div className="ml-auto flex items-center text-[#e8e8e8] pr-[24px]">
        <ChevronUp size={20} className="mr-[19px]" />
        <svg width="22" height="20" viewBox="0 0 22 20" className="mr-[19px]"><circle cx="8" cy="9" r="6" fill="#9a9a9a" /><circle cx="14" cy="7" r="5" fill="#c8c8c8" /><circle cx="15" cy="13" r="6" fill="#4cc2ff" /><rect x="14" y="11.500" width="2" height="5.500" fill="#1c1c1c" /><rect x="14" y="9" width="2" height="1.500" fill="#1c1c1c" /></svg>
        <svg width="20" height="14" viewBox="0 0 20 14" fill="none" stroke="currentColor" className="mr-[24px]"><rect x=".5" y=".5" width="19" height="13" rx="1.500" /><path d="M3.500 4h1M6.500 4h1M9.500 4h1M12.500 4h1M15.500 4h1M3.500 7h1M6.500 7h1M9.500 7h1M12.500 7h1M15.500 7h1M5 10.500h10" /></svg>
        <div className="text-[14.500px] leading-[23px] text-center mr-[23px]"><div>ENG</div><div>IN</div></div>
        <Wifi size={20} className="mr-[8px]" />
        <Volume2 size={20} strokeWidth={1.300} className="mr-[12px]" />
        <svg width="20" height="14" viewBox="0 0 20 14" fill="none" stroke="currentColor" className="mr-[21px]"><rect x=".5" y=".5" width="16" height="13" rx="3" /><rect x="2.500" y="2.500" width="12" height="9" rx="1.500" fill="currentColor" stroke="none" /><path d="M18.500 5v4" /></svg>
        <div className="text-[14.500px] leading-[23px] text-right"><div>17:23</div><div>19-12-2024</div></div>
      </div>
    </footer>
  );
}

export default function App() {
  return (
    <div className="w-[1920px] h-[1200px] overflow-hidden flex flex-col bg-[#182412] [font-family:Inter,sans-serif]">
      <TabStrip />
      <AddressBar />
      <div className="flex-1 flex min-h-0">
        <LeftPanel />
        <Canvas />
        <RightPanel />
      </div>
      <Taskbar />
    </div>
  );
}
